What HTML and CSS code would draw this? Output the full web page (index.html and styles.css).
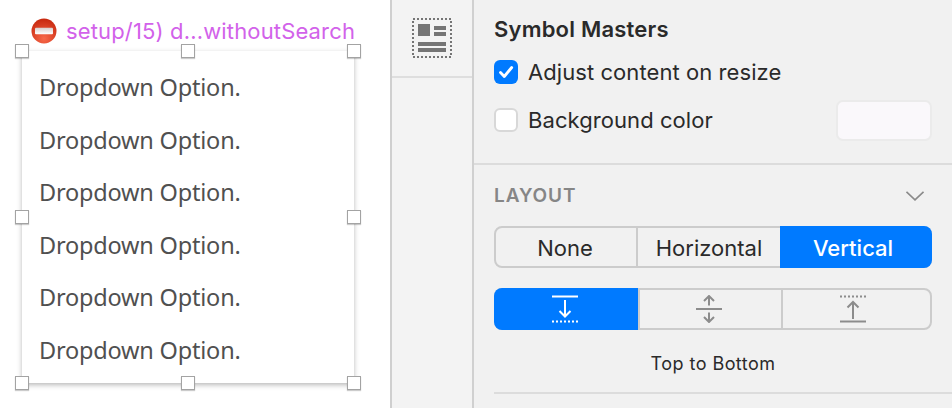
FILE: index.html
```html
<!DOCTYPE html>
<html lang="en">
<head>
<meta charset="utf-8">
<title>Symbol Masters</title>
<link rel="stylesheet" href="styles.css">
</head>
<body>
<div class="app">
  <main class="canvas">
    <div class="artboard-title">
      <svg class="stop" viewBox="0 0 26 26" width="26" height="26">
        <defs>
          <radialGradient id="stopfill" cx="50%" cy="80%" r="75%">
            <stop offset="0" stop-color="#f8694a"/>
            <stop offset="1" stop-color="#c92a10"/>
          </radialGradient>
          <linearGradient id="stopbar" x1="0" y1="0" x2="0" y2="1">
            <stop offset="0" stop-color="#d9cfcc"/>
            <stop offset="1" stop-color="#ffffff"/>
          </linearGradient>
        </defs>
        <circle cx="13" cy="13" r="12.5" fill="url(#stopfill)"/>
        <rect x="4" y="9.700" width="18" height="6.500" rx="1" fill="url(#stopbar)"/>
      </svg>
      <span>setup/15) d...withoutSearch</span>
    </div>
    <div class="artboard">
      <div class="option">Dropdown Option.</div>
      <div class="option">Dropdown Option.</div>
      <div class="option">Dropdown Option.</div>
      <div class="option">Dropdown Option.</div>
      <div class="option">Dropdown Option.</div>
      <div class="option">Dropdown Option.</div>
      <i class="handle tl"></i><i class="handle tc"></i><i class="handle tr"></i>
      <i class="handle ml"></i><i class="handle mr"></i>
      <i class="handle bl"></i><i class="handle bc"></i><i class="handle br"></i>
    </div>
  </main>
  <nav class="tabs">
    <div class="tab">
      <svg viewBox="0 0 40 40" width="40" height="40">
        <rect x="1" y="1" width="38" height="38" fill="none" stroke="#757575" stroke-width="2" stroke-dasharray="2 2"/>
        <rect x="6" y="6" width="12" height="12" fill="#757575"/>
        <rect x="22" y="8" width="12" height="4" fill="#757575"/>
        <rect x="22" y="14" width="12" height="4" fill="#757575"/>
        <rect x="6" y="24" width="28" height="4" fill="#757575"/>
        <rect x="6" y="30" width="28" height="4" fill="#757575"/>
      </svg>
    </div>
  </nav>
  <aside class="inspector">
    <section class="masters">
      <h2>Symbol Masters</h2>
      <label class="check-row">
        <span class="box on">
          <svg viewBox="0 0 24 24" width="24" height="24"><path d="M6.500 12.500l3.800 4 7.400-9" fill="none" stroke="#fff" stroke-width="2.800" stroke-linecap="round" stroke-linejoin="round"/></svg>
        </span>
        <span>Adjust content on resize</span>
      </label>
      <div class="color-row">
        <label class="check-row">
          <span class="box"></span>
          <span>Background color</span>
        </label>
        <span class="swatch"></span>
      </div>
    </section>
    <section class="layout">
      <header class="layout-head">
        <h3>LAYOUT</h3>
        <svg viewBox="0 0 18 10" width="18" height="10"><path d="M.5.800l8.500 8 8.500-8" fill="none" stroke="#8a8a8a" stroke-width="1.600"/></svg>
      </header>
      <div class="seg text-seg">
        <div class="seg-item">None</div>
        <div class="seg-item">Horizontal</div>
        <div class="seg-item active">Vertical</div>
      </div>
      <div class="seg icon-seg">
        <div class="seg-item active">
          <svg viewBox="0 0 28 28" width="28" height="28"><path d="M1 1.500h26" stroke="#fff" stroke-width="2"/><path d="M14 5v16M8.500 16l5.500 5.500 5.500-5.500" fill="none" stroke="#fff" stroke-width="2"/><path d="M1 26.500h26" stroke="#fff" stroke-width="2" stroke-dasharray="2 2"/></svg>
        </div>
        <div class="seg-item">
          <svg viewBox="0 0 28 28" width="28" height="28"><path d="M1 14h26" stroke="#8c8c8c" stroke-width="2"/><path d="M14 1.500v9M9 6l5-5 5 5M14 17.500v9M9 22l5 5 5-5" fill="none" stroke="#8c8c8c" stroke-width="2"/></svg>
        </div>
        <div class="seg-item">
          <svg viewBox="0 0 28 28" width="28" height="28"><path d="M1 1.500h26" stroke="#8c8c8c" stroke-width="2" stroke-dasharray="2 2"/><path d="M14 8v16M8.500 12.500l5.500-5.500 5.500 5.500" fill="none" stroke="#8c8c8c" stroke-width="2"/><path d="M1 26.500h26" stroke="#8c8c8c" stroke-width="2"/></svg>
        </div>
      </div>
      <p class="caption">Top to Bottom</p>
      <div class="rule"></div>
    </section>
  </aside>
</div>
</body>
</html>
```

FILE: styles.css
```css
* { box-sizing: border-box; }
html, body { margin: 0; height: 100%; }
body { overflow: hidden; background: #f2f2f2; font-family: Inter, "Liberation Sans", sans-serif; }
.app { display: flex; width: 952px; height: 408px; }

.canvas { width: 392px; flex: none; background: #fff; border-right: 2px solid #cfcfcf; padding: 16px 0 0 22px; }
.artboard-title { display: flex; align-items: center; gap: 9px; height: 29px; margin-left: 9px; margin-bottom: 6px; font-size: 22px; letter-spacing: .15px; color: #d262ea; white-space: nowrap; }
.stop { flex: none; }
.artboard { position: relative; width: 332px; height: 332px; background: #fff; box-shadow: 0 2px 5px rgba(0,0,0,.28); padding: 10px 0 0 17px; }
.option { height: 52.600px; line-height: 52.600px; font-family: "Noto Sans", sans-serif; font-size: 23.500px; letter-spacing: -.2px; color: #505050; white-space: nowrap; }
.handle { position: absolute; width: 14px; height: 14px; margin: -7px 0 0 -7px; background: #fff; border: 1px solid #a3a3a3; box-shadow: 0 1px 1px rgba(0,0,0,.2); }
.tl { left: 0; top: 0; } .tc { left: 166px; top: 0; } .tr { left: 332px; top: 0; }
.ml { left: 0; top: 166px; } .mr { left: 332px; top: 166px; }
.bl { left: 0; top: 332px; } .bc { left: 166px; top: 332px; } .br { left: 332px; top: 332px; }

.tabs { width: 82px; flex: none; border-right: 2px solid #d0d0d0; background: #f3f3f3; }
.tab { height: 78px; display: flex; justify-content: center; padding-top: 18px; border-bottom: 2px solid #dedede; }

.inspector { flex: 1; min-width: 0; color: #2a2a2a; background: #f1f1f1; }
.masters { height: 165px; padding: 16px 20px 0 20px; border-bottom: 2px solid #dcdcdc; }
h2 { margin: 0 0 18px; height: 26px; line-height: 26px; font-size: 22px; font-weight: 600; letter-spacing: .2px; color: #2a2a2a; }
.check-row { display: flex; align-items: center; gap: 10px; font-size: 22px; letter-spacing: .07px; height: 24px; white-space: nowrap; }
.box { flex: none; width: 24px; height: 24px; border-radius: 6px; background: #fff; border: 2px solid #d8d8d8; }
.box.on { background: #007aff; border: 0; }
.box svg { display: block; }
.color-row { display: flex; align-items: center; justify-content: space-between; height: 41px; margin-top: 16px; }
.color-row .check-row { margin-bottom: 1px; }
.swatch { width: 96px; height: 41px; border-radius: 7px; background: #faf8fb; border: 2px solid #ebebeb; }

.layout { padding: 0 0 0 20px; }
.layout-head { display: flex; align-items: center; justify-content: space-between; height: 61px; padding-right: 28px; }
h3 { margin: 0; font-size: 19px; font-weight: 600; color: #868686; letter-spacing: .9px; }
.seg { display: grid; width: 438px; height: 42px; border: 2px solid #cccccc; border-radius: 8px; }
.text-seg { grid-template-columns: 140px 144px 1fr; }
.text-seg .seg-item { padding-top: 1px; }
.icon-seg { grid-template-columns: 142px 143px 1fr; margin-top: 20px; }
.icon-seg .seg-item:first-child { padding-right: 2px; }
.icon-seg .seg-item:nth-child(2) { padding-right: 3px; }
.icon-seg .seg-item:last-child { padding-right: 9px; }
.seg-item { display: flex; align-items: center; justify-content: center; font-size: 22px; color: #2a2a2a; border-left: 2px solid #cccccc; margin: -2px 0; }
.seg-item:first-child { border-left: 0; margin-left: -2px; border-radius: 8px 0 0 8px; }
.seg-item:last-child { margin-right: -2px; padding-right: 6px; border-radius: 0 8px 8px 0; }
.seg-item.active { background: #007aff; color: #fff; border-left: 0; font-weight: 500; }
.caption { margin: 22px 0 0; width: 438px; text-align: center; font-size: 18px; letter-spacing: .45px; height: 24px; line-height: 24px; color: #2a2a2a; }
.rule { height: 2px; margin-top: 16px; background: #dcdcdc; }
```
